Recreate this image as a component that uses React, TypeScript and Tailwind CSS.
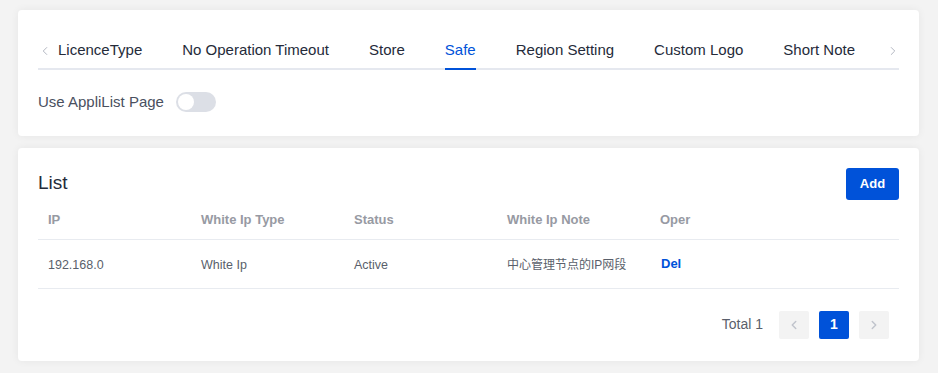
import { ChevronLeft, ChevronRight } from 'lucide-react'

const tabs = ['LicenceType', 'No Operation Timeout', 'Store', 'Safe', 'Region Setting', 'Custom Logo', 'Short Note']

const columns = ['IP', 'White Ip Type', 'Status', 'White Ip Note', 'Oper']

const rows = [{ ip: '192.168.0', type: 'White Ip', status: 'Active', note: '中心管理节点的IP网段' }]

export default function App() {
  return (
    <div
      className="min-h-[373px] bg-[#f3f3f3] pt-[10px] pl-[18px] pr-[19px] pb-3 flex flex-col gap-3"
      style={{ fontFamily: '"Liberation Sans", "Noto Sans CJK SC", sans-serif' }}
    >
      {/* settings tabs */}
      <div className="bg-white rounded-[4px] shadow-[0_0_8px_rgba(0,0,0,0.06)] px-5 pt-5 pb-[22px]">
        <div className="flex items-center h-10 border-b-2 border-[#e5e8ef]">
          <ChevronLeft className="w-[14px] h-[14px] text-[#a8adb8] mt-1 mr-[6px]" strokeWidth={1.5} />
          <div className="flex-1 flex items-center gap-10 h-full">
            {tabs.map((t) => (
              <div
                key={t}
                className={`h-full flex items-center pt-[2px] text-[15px] relative ${t === 'Safe' ? 'text-[#0052d9]' : 'text-[#252b3a]'}`}
              >
                {t}
                {t === 'Safe' && <div className="absolute left-0 right-0 -bottom-[2px] h-[2px] bg-[#0052d9]" />}
              </div>
            ))}
          </div>
          <ChevronRight className="w-[14px] h-[14px] text-[#a8adb8] mt-1 -mr-[1px]" strokeWidth={1.5} />
        </div>
        <div className="flex items-center gap-3 mt-[21px]">
          <span className="text-[15px] text-[#4a5060]">Use AppliList Page</span>
          <div className="w-10 h-5 rounded-full bg-[#dcdfe6] p-[2px] flex items-center">
            <div className="w-4 h-4 rounded-full bg-white" />
          </div>
        </div>
      </div>

      {/* white ip list */}
      <div className="bg-white rounded-[4px] shadow-[0_0_8px_rgba(0,0,0,0.06)] px-5 pt-5 pb-[22px]">
        <div className="flex items-center justify-between">
          <span className="text-[19px] text-[#252b3a]">List</span>
          <button className="h-8 w-[53px] rounded-[3px] bg-[#0052d9] text-white text-[13px] font-bold">Add</button>
        </div>
        <div className="grid grid-cols-[153px_153px_153px_153px_1fr] h-[40px] items-center pl-[10px] pt-[2px] border-b border-[#e8ebf0] text-[13px] font-bold text-[#979aa3]">
          {columns.map((c) => (
            <div key={c}>{c}</div>
          ))}
        </div>
        {rows.map((r) => (
          <div
            key={r.ip}
            className="grid grid-cols-[153px_153px_153px_153px_1fr] h-[49px] items-center pl-[10px] pt-[3px] border-b border-[#e8ebf0] text-[12.5px] text-[#5a5f6b]"
          >
            <div>{r.ip}</div>
            <div>{r.type}</div>
            <div>{r.status}</div>
            <div className="text-[12px]">{r.note}</div>
            <div className="text-[13px] text-[#0052d9] font-bold pl-[1px] -mt-[2px]">Del</div>
          </div>
        ))}
        <div className="flex items-center justify-end gap-[10px] mt-[22px] pr-[10px]">
          <span className="text-[14px] text-[#5a5f6b] mr-[6px]">Total 1</span>
          <div className="w-[30px] h-[28px] rounded-[2px] bg-[#f3f3f3] flex items-center justify-center">
            <ChevronLeft className="w-[14px] h-[14px] text-[#c0c4cc]" strokeWidth={2.5} />
          </div>
          <div className="w-[30px] h-[28px] rounded-[2px] bg-[#0052d9] flex items-center justify-center text-white text-[14px] font-bold">
            1
          </div>
          <div className="w-[30px] h-[28px] rounded-[2px] bg-[#f3f3f3] flex items-center justify-center">
            <ChevronRight className="w-[14px] h-[14px] text-[#c0c4cc]" strokeWidth={2.5} />
          </div>
        </div>
      </div>
    </div>
  )
}
